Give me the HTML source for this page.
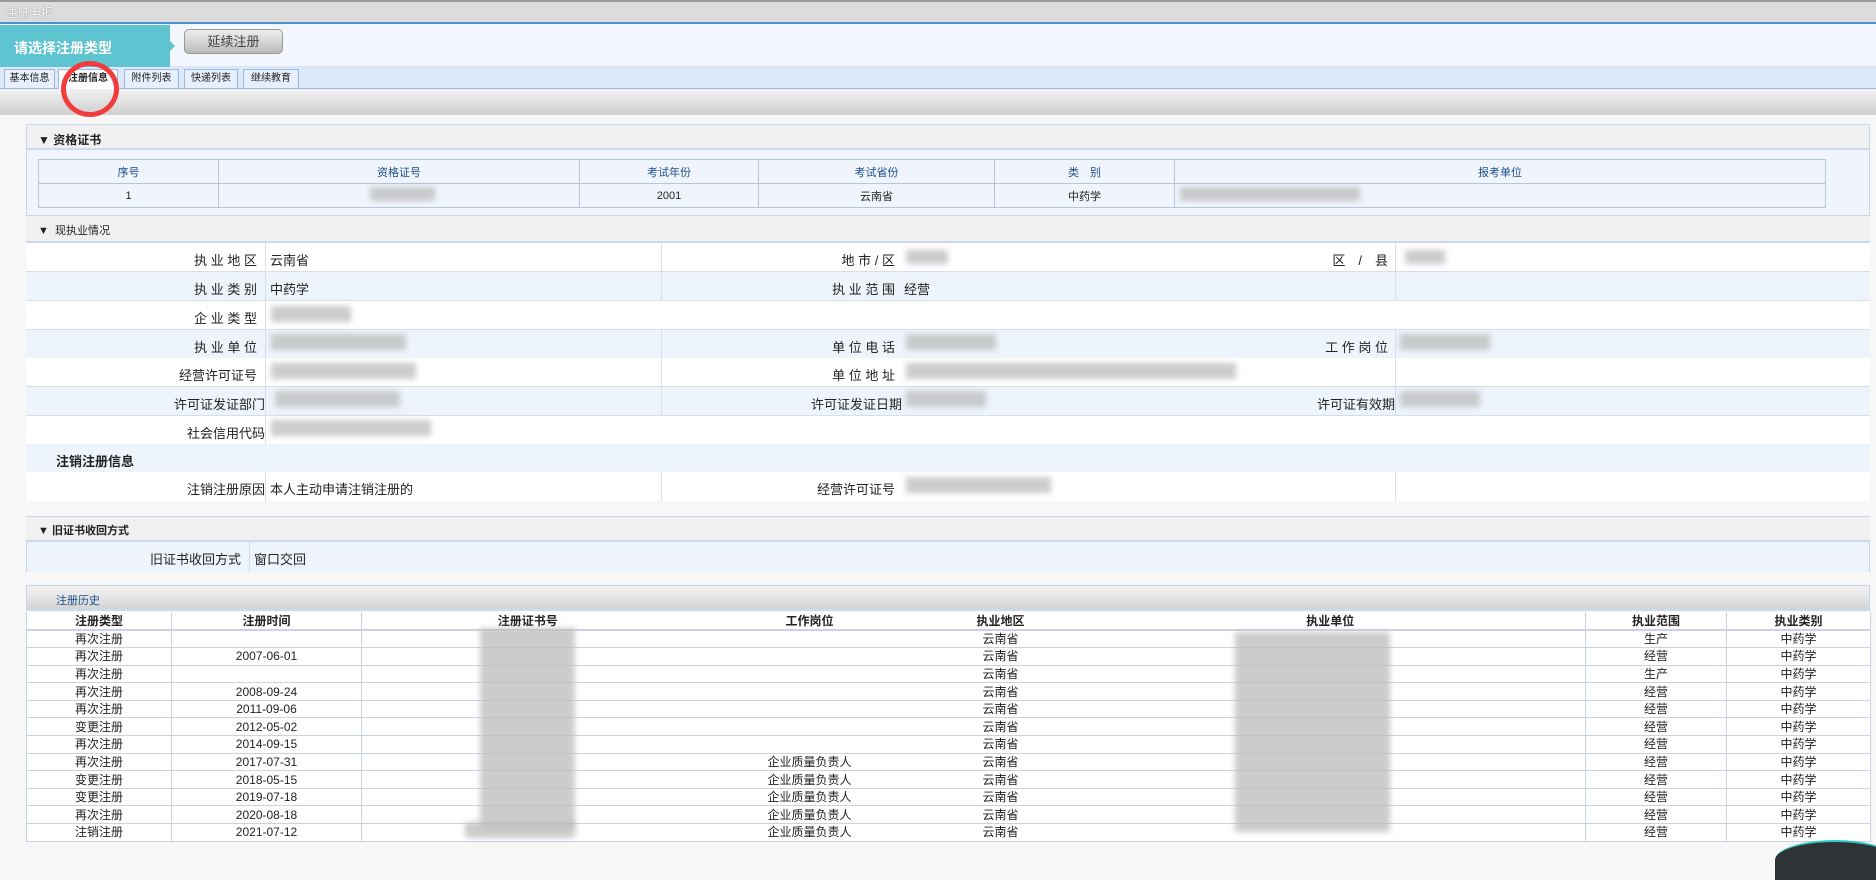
<!DOCTYPE html>
<html><head><meta charset="utf-8">
<style>
*{margin:0;padding:0;box-sizing:border-box}
body{width:1876px;height:855px;overflow:hidden;background:#f7f7f7;font-family:"Liberation Sans","Noto Sans CJK SC",sans-serif;font-size:12px;color:#222;position:relative}
.a{position:absolute}
.blur{position:absolute;background:#bbb;filter:blur(3px);opacity:.75}
table{border-collapse:collapse}
.t1 td{border:1px solid #b8c4d8;text-align:center;height:24px;font-size:11px}
.hist{table-layout:fixed}
.hist td{text-align:center;font-size:12px;height:17.6px;line-height:16px;border-bottom:1px solid #c9d3e3;border-right:1px solid #c9d3e3;padding:0;white-space:nowrap;overflow:hidden}
.hist tr:first-child td{font-weight:bold;height:18px;border-bottom:2px solid #c9d3e3}
.hist td.n{border-right:none}
.row{position:absolute;left:26px;width:1844px;height:29px;border-bottom:1px solid #d5deea;font-size:13px}
.row span{position:absolute;top:7px}
</style></head><body>
<!-- title bar -->
<div class="a" style="left:0;top:0;width:1876px;height:24px;background:#dcdcdc;border-top:2px solid #999;border-bottom:2px solid #4a8fd0"></div>
<div class="a" style="left:5px;top:4px;color:#fff;font-size:12px;text-shadow:0 0 1px #555">注册申报</div>
<!-- header -->
<div class="a" style="left:0;top:24px;width:1876px;height:43px;background:#f3f7fd;border-bottom:1px solid #d9e2ee"></div>
<div class="a" style="left:0;top:25px;width:170px;height:42px;background:#5ec4cf"></div>
<div class="a" style="left:170px;top:41px;width:0;height:0;border-top:5px solid transparent;border-bottom:5px solid transparent;border-left:5px solid #5ec4cf"></div>
<div class="a" style="left:14px;top:38px;color:#fff;font-weight:bold;font-size:14px">请选择注册类型</div>
<div class="a" style="left:184px;top:29px;width:99px;height:25px;border:1px solid #999;border-radius:5px;background:linear-gradient(#eee,#bbb);text-align:center;line-height:23px;font-size:13px;color:#444">延续注册</div>
<!-- tabs -->
<div class="a" style="left:0;top:67px;width:1876px;height:22px;background:#dde9f9;border-bottom:1px solid #9db8e0"></div>
<div class="a" style="left:4px;top:69px;width:51px;height:20px;border:1px solid #9db8e0;background:#e6effb;font-size:10px;text-align:center;line-height:18px">基本信息</div>
<div class="a" style="left:58px;top:69px;width:60px;height:21px;border:1px solid #9db8e0;border-bottom:none;background:#fff;font-size:10px;font-weight:bold;text-align:center;line-height:18px">注册信息</div>
<div class="a" style="left:124px;top:69px;width:55px;height:20px;border:1px solid #9db8e0;background:#e6effb;font-size:10px;text-align:center;line-height:18px">附件列表</div>
<div class="a" style="left:184px;top:69px;width:54px;height:20px;border:1px solid #9db8e0;background:#e6effb;font-size:10px;text-align:center;line-height:18px">快递列表</div>
<div class="a" style="left:243px;top:69px;width:56px;height:20px;border:1px solid #9db8e0;background:#e6effb;font-size:10px;text-align:center;line-height:18px">继续教育</div>
<div class="a" style="left:0;top:89px;width:1876px;height:26px;background:linear-gradient(#f2f2f2,#cfcfcf)"></div>
<div class="a" style="left:61px;top:61px;width:58px;height:56px;border:5px solid #f03c3c;border-radius:50%"></div>

<!-- panel 1 -->
<div class="a" style="left:26px;top:124px;width:1844px;height:92px;background:#f0f5fd;border:1px solid #c6d4ea"></div>
<div class="a" style="left:27px;top:125px;width:1842px;height:25px;background:#f1f1f1;border-bottom:2px solid #cdd9ec"></div>
<div class="a" style="left:38px;top:131px;font-weight:bold;font-size:12px">▼ 资格证书</div>
<table class="t1 a" style="left:38px;top:159px;width:1788px">
<tr style="color:#1a4c8a"><td style="width:180px">序号</td><td style="width:361px">资格证号</td><td style="width:179px">考试年份</td><td style="width:236px">考试省份</td><td style="width:180px">类　别</td><td>报考单位</td></tr>
<tr><td>1</td><td></td><td>2001</td><td>云南省</td><td>中药学</td><td></td></tr>
</table>
<div class="blur" style="left:370px;top:187px;width:65px;height:14px"></div>
<div class="blur" style="left:1180px;top:187px;width:180px;height:14px"></div>

<!-- panel 2 -->
<div class="a" style="left:26px;top:216px;width:1844px;height:285px;background:#fff;border-left:1px solid #c6d4ea;border-right:1px solid #c6d4ea"></div>
<div class="a" style="left:26px;top:216px;width:1844px;height:27px;background:#f0f0f0;border-bottom:2px solid #cdd9ec"></div>
<div class="a" style="left:38px;top:222px;font-size:11px">▼ &nbsp;现执业情况</div>
<div class="row" style="top:243px;background:#fff"><span style="right:1613px">执 业 地 区</span><span style="left:244px">云南省</span><span style="right:975px">地 市 / 区</span><span style="right:482px">区　/　县</span></div>
<div class="row" style="top:272px;background:#eef4fc"><span style="right:1613px">执 业 类 别</span><span style="left:244px">中药学</span><span style="right:975px">执 业 范 围</span><span style="left:878px">经营</span></div>
<div class="row" style="top:301px;background:#fff"><span style="right:1613px">企 业 类 型</span></div>
<div class="row" style="top:330px;background:#eef4fc"><span style="right:1613px">执 业 单 位</span><span style="right:975px">单 位 电 话</span><span style="right:482px">工 作 岗 位</span></div>
<div class="row" style="top:358px;background:#fff"><span style="right:1613px">经营许可证号</span><span style="right:975px">单 位 地 址</span></div>
<div class="row" style="top:387px;background:#eef4fc"><span style="right:1605px">许可证发证部门</span><span style="right:968px">许可证发证日期</span><span style="right:475px">许可证有效期</span></div>
<div class="row" style="top:416px;background:#fff"><span style="right:1605px">社会信用代码</span></div>
<div class="row" style="top:444px;background:#eef4fc;border:none"><span style="left:30px;font-weight:bold">注销注册信息</span></div>
<div class="row" style="top:472px;background:#fff;border:none"><span style="right:1605px">注销注册原因</span><span style="left:244px">本人主动申请注销注册的</span><span style="right:975px">经营许可证号</span></div>
<div class="a" style="left:265px;top:243px;width:1px;height:201px;background:#d5deea"></div>
<div class="a" style="left:265px;top:472px;width:1px;height:29px;background:#d5deea"></div>
<div class="a" style="left:661px;top:243px;width:1px;height:58px;background:#d5deea"></div>
<div class="a" style="left:661px;top:330px;width:1px;height:86px;background:#d5deea"></div>
<div class="a" style="left:661px;top:472px;width:1px;height:29px;background:#d5deea"></div>
<div class="a" style="left:1395px;top:243px;width:1px;height:58px;background:#d5deea"></div>
<div class="a" style="left:1395px;top:330px;width:1px;height:86px;background:#d5deea"></div>
<div class="a" style="left:1395px;top:472px;width:1px;height:29px;background:#d5deea"></div>
<div class="blur" style="left:906px;top:250px;width:42px;height:14px"></div>
<div class="blur" style="left:1405px;top:250px;width:40px;height:14px"></div>
<div class="blur" style="left:271px;top:306px;width:80px;height:16px"></div>
<div class="blur" style="left:271px;top:334px;width:135px;height:16px"></div>
<div class="blur" style="left:906px;top:334px;width:90px;height:16px"></div>
<div class="blur" style="left:1400px;top:334px;width:90px;height:16px"></div>
<div class="blur" style="left:271px;top:363px;width:145px;height:16px"></div>
<div class="blur" style="left:906px;top:363px;width:330px;height:16px"></div>
<div class="blur" style="left:275px;top:391px;width:125px;height:16px"></div>
<div class="blur" style="left:906px;top:391px;width:80px;height:16px"></div>
<div class="blur" style="left:1400px;top:391px;width:80px;height:16px"></div>
<div class="blur" style="left:271px;top:420px;width:160px;height:16px"></div>
<div class="blur" style="left:906px;top:477px;width:145px;height:16px"></div>

<!-- panel 3 -->
<div class="a" style="left:26px;top:516px;width:1844px;height:56px;background:#eef4fc;border-left:1px solid #c6d4ea;border-right:1px solid #c6d4ea"></div>
<div class="a" style="left:26px;top:516px;width:1844px;height:26px;background:#f0f0f0;border-top:1px solid #c6d4ea;border-bottom:2px solid #cdd9ec"></div>
<div class="a" style="left:38px;top:522px;font-weight:bold;font-size:11px">▼ 旧证书收回方式</div>
<div class="a" style="left:249px;top:542px;width:1px;height:30px;background:#d5deea"></div>
<div class="a" style="left:150px;top:549px;font-size:13px">旧证书收回方式</div>
<div class="a" style="left:254px;top:549px;font-size:13px">窗口交回</div>

<!-- panel 4 -->
<div class="a" style="left:26px;top:585px;width:1844px;height:26px;background:linear-gradient(#f4f4f4,#d4d4d4);border:1px solid #c6d4ea;border-bottom:2px solid #cdd9ec"></div>
<div class="a" style="left:56px;top:592px;font-size:11px;color:#1a4c8a">注册历史</div>
<table class="hist a" style="left:26px;top:612px;width:1844px;background:#fff;border-left:1px solid #c6d4ea">
<colgroup><col style="width:145px"><col style="width:190px"><col style="width:332px"><col style="width:232px"><col style="width:150px"><col style="width:510px"><col style="width:141px"><col style="width:144px"></colgroup>
<tr><td>注册类型</td><td>注册时间</td><td class="n">注册证书号</td><td class="n">工作岗位</td><td class="n">执业地区</td><td>执业单位</td><td>执业范围</td><td>执业类别</td></tr>
<tr><td>再次注册</td><td></td><td class="n"></td><td class="n"></td><td class="n">云南省</td><td></td><td>生产</td><td>中药学</td></tr>
<tr><td>再次注册</td><td>2007-06-01</td><td class="n"></td><td class="n"></td><td class="n">云南省</td><td></td><td>经营</td><td>中药学</td></tr>
<tr><td>再次注册</td><td></td><td class="n"></td><td class="n"></td><td class="n">云南省</td><td></td><td>生产</td><td>中药学</td></tr>
<tr><td>再次注册</td><td>2008-09-24</td><td class="n"></td><td class="n"></td><td class="n">云南省</td><td></td><td>经营</td><td>中药学</td></tr>
<tr><td>再次注册</td><td>2011-09-06</td><td class="n"></td><td class="n"></td><td class="n">云南省</td><td></td><td>经营</td><td>中药学</td></tr>
<tr><td>变更注册</td><td>2012-05-02</td><td class="n"></td><td class="n"></td><td class="n">云南省</td><td></td><td>经营</td><td>中药学</td></tr>
<tr><td>再次注册</td><td>2014-09-15</td><td class="n"></td><td class="n"></td><td class="n">云南省</td><td></td><td>经营</td><td>中药学</td></tr>
<tr><td>再次注册</td><td>2017-07-31</td><td class="n"></td><td class="n">企业质量负责人</td><td class="n">云南省</td><td></td><td>经营</td><td>中药学</td></tr>
<tr><td>变更注册</td><td>2018-05-15</td><td class="n"></td><td class="n">企业质量负责人</td><td class="n">云南省</td><td></td><td>经营</td><td>中药学</td></tr>
<tr><td>变更注册</td><td>2019-07-18</td><td class="n"></td><td class="n">企业质量负责人</td><td class="n">云南省</td><td></td><td>经营</td><td>中药学</td></tr>
<tr><td>再次注册</td><td>2020-08-18</td><td class="n"></td><td class="n">企业质量负责人</td><td class="n">云南省</td><td></td><td>经营</td><td>中药学</td></tr>
<tr><td>注销注册</td><td>2021-07-12</td><td class="n"></td><td class="n">企业质量负责人</td><td class="n">云南省</td><td></td><td>经营</td><td>中药学</td></tr>
</table>
<div class="blur" style="left:480px;top:628px;width:95px;height:200px"></div>
<div class="blur" style="left:465px;top:822px;width:110px;height:16px"></div>
<div class="blur" style="left:1235px;top:632px;width:155px;height:200px"></div>
<div class="a" style="left:1775px;top:840px;width:120px;height:40px;border-radius:50% 50% 0 0;background:#2f3335;border-top:2px solid #3cc"></div>
</body></html>
